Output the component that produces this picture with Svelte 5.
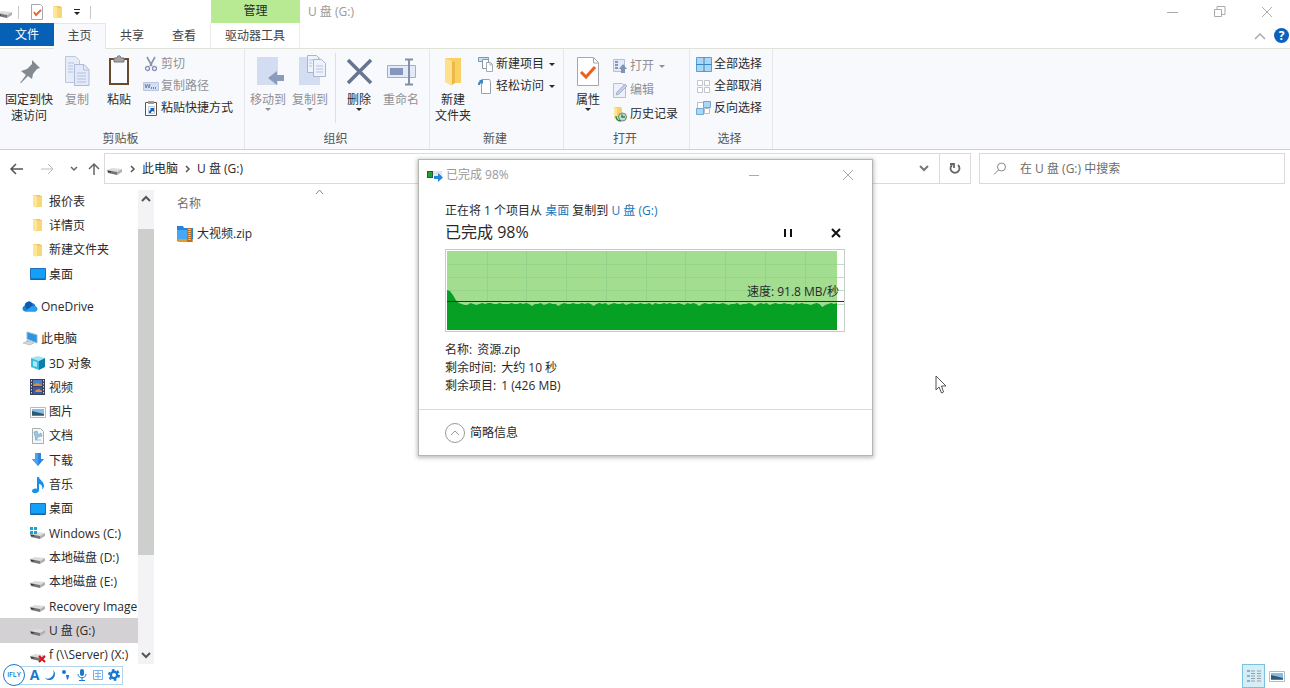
<script lang="ts">
    const tabs = [
        { name: '文件', kind: 'file-tab' },
        { name: '主页', kind: 'active' },
        { name: '共享', kind: '' },
        { name: '查看', kind: '' },
        { name: '驱动器工具', kind: 'context' }
    ];

    // groups of the navigation pane, from top to bottom
    const tree = [
        [
            { name: '报价表', icon: 'folder' },
            { name: '详情页', icon: 'folder' },
            { name: '新建文件夹', icon: 'folder' },
            { name: '桌面', icon: 'desktop' }
        ],
        [{ name: 'OneDrive', icon: 'cloud', root: true }],
        [
            { name: '此电脑', icon: 'pc', root: true },
            { name: '3D 对象', icon: 'cube' },
            { name: '视频', icon: 'video' },
            { name: '图片', icon: 'picture' },
            { name: '文档', icon: 'document' },
            { name: '下载', icon: 'download' },
            { name: '音乐', icon: 'music' },
            { name: '桌面', icon: 'desktop' },
            { name: 'Windows (C:)', icon: 'windrive' },
            { name: '本地磁盘 (D:)', icon: 'drive' },
            { name: '本地磁盘 (E:)', icon: 'drive' },
            { name: 'Recovery Image', icon: 'drive' },
            { name: 'U 盘 (G:)', icon: 'drive', selected: true },
            { name: 'f (\\\\Server) (X:)', icon: 'netdrive' }
        ]
    ];

    // transfer speed curve, one sample every few pixels
    const speed = [40, 41, 45, 50, 53, 54, 55, 55, 53, 54, 55, 54, 53, 54, 53, 53, 54, 54, 53, 54, 54, 54, 53, 54, 54, 53, 54, 53, 54, 56, 54, 54, 53, 55, 54, 53, 54, 54, 56, 54];
    const tail = [53, 54, 54, 53, 54, 54, 53, 54, 53, 54, 56, 54, 53, 54, 53, 55, 54, 53, 54, 54, 53, 55, 54, 53, 54, 54, 53, 54, 54, 53, 55, 53, 54, 54, 53, 54, 53, 54, 54, 53, 54, 55, 53, 54, 53, 54, 56, 54, 53, 54, 54, 53, 54, 54, 53, 54, 55, 54, 54, 53, 55, 54, 54, 53, 54, 56, 54, 53, 54, 53, 55, 54, 53, 54, 54, 53, 54, 54, 55, 53, 54, 53, 54, 54, 55, 54, 53, 54, 57, 55, 54, 53, 54, 53];
    const samples = [...speed, ...tail];
    const step = 390 / (samples.length - 1);
    const curve = 'M2 81 ' + samples.map((y, i) => `L${(2 + i * step).toFixed(1)} ${y + 1}`).join(' ') + ' L392 81Z';

    let open = $state(true);
</script>

{#snippet icon(name, size = 16)}
    <svg class="icon" width={size} height={size} viewBox={size > 16 ? '0 0 32 32' : '0 0 16 16'} aria-hidden="true">
        {#if name === 'folder'}
            <path d="M3 2h7l1 1h1v11H5l-2-1z" fill="#f3c95c" />
            <path d="M3 2l4 1v12l-4-2z" fill="#ffe59a" />
            <path d="M7 4h5v10H7z" fill="#f8d777" />
        {:else if name === 'desktop'}
            <path d="M.5 2.500h15v11H.5z" fill="#12a0f8" stroke="#1c6fb8" />
            <path d="M1 13h14" stroke="#155a94" />
        {:else if name === 'cloud'}
            <path d="M3 13.500a3 3 0 0 1-.5-5.800A4 4 0 0 1 9.500 5a4 4 0 0 1 4 3.500 2.600 2.600 0 0 1 0 5z" fill="#1683d8" />
            <path d="M3 7.500A4 4 0 0 1 10 5l1 2.500-6 4z" fill="#0a5cb0" />
            <path d="M3 13.500l7-5.500 3.500.5a2.600 2.600 0 0 1 0 5z" fill="#2a9df0" />
        {:else if name === 'pc'}
            <path d="M5 1l10 3v8L5 8z" fill="#2f93e0" stroke="#8eb9d8" />
            <path d="M5 9l4 2-1 1-4-1z" fill="#a0a8b0" />
            <path d="M1 12l5-2 6 2-4 2z" fill="#d4d8dc" stroke="#a8acb4" stroke-width=".6" />
        {:else if name === 'cube'}
            <path d="M1 3l7-2 7 2-6 3z" fill="#9ee4f4" />
            <path d="M1 3l8 3v9l-8-3z" fill="#38bde0" />
            <path d="M9 6l6-3v9l-6 3z" fill="#0a7fae" />
            <path d="M3 6l4 1v5l-4-1z" fill="#a6ebf8" />
        {:else if name === 'video'}
            <path d="M0 0h15v16H0z" fill="#38405c" />
            <path d="M3 1h9v6H3z" fill="#4c80c8" />
            <path d="M3 8h9v7H3z" fill="#3a58ac" />
            <path d="M3 6l4-2 5 2v1H3zM6 11l3-1 3 2v1H5z" fill="#d89040" />
            <path d="M1.500 1v14M13.500 1v14" stroke="#d0d4dc" stroke-dasharray="1.500 1.500" />
        {:else if name === 'picture'}
            <path d="M.5 3.500h15v10H.5z" fill="#fff" stroke="#b4bcc4" />
            <path d="M2 5h12v7H2z" fill="#86bce8" />
            <path d="M2 7l4 1 8 2v2H2z" fill="#2f5a72" />
            <path d="M2 11l12 0v1H2z" fill="#3d86c4" />
        {:else if name === 'document'}
            <path d="M2.500.5h8l3 3v12h-11z" fill="#f4f8fa" stroke="#a6b0ae" />
            <path d="M4 4l3-1 1 4 3-2 1 3-4 1-2 3-1-4zM5 12h6" fill="#9cc8e4" stroke="#6f94b4" stroke-width=".6" />
        {:else if name === 'download'}
            <path d="M5 1h6v6h3l-6 7-6-7h3z" fill="#2e86dc" />
            <path d="M5 1h3v13L2 7h3z" fill="#4da0ea" />
        {:else if name === 'music'}
            <path d="M7 0h2c0 3 5 4 5 9 0 1-1 3-2 3 1-3-1-5-3-5v6c0 4-7 4-7 1 0-2 3-3 5-2z" fill="#1590ec" />
        {:else if name === 'drive' || name === 'windrive' || name === 'netdrive'}
            <path d="M0 9l5-2 10 1-5 3z" fill="#dcdcdc" />
            <path d="M0 9l10 2v3L1 12z" fill="#757575" />
            <path d="M10 11l5-3v3l-5 3z" fill="#b0b0b0" />
            <path d="M1 10l3 .6v1l-3-.6z" fill="#2c2c2c" />
            {#if name === 'windrive'}
                <path d="M0 2h3v3H0zM4 2h3v3H4zM0 6h3v3H0zM4 6h3v3H4z" fill="#17a4d4" />
            {:else if name === 'netdrive'}
                <path d="M9 9l6 6M15 9l-6 6" stroke="#d8141c" stroke-width="2" />
            {/if}
        {:else if name === 'zip'}
            <path d="M0 0h6l1 2h9v13H0z" fill="#2384dc" />
            <path d="M0 4h10v9H0z" fill="#46a8f4" />
            <path d="M0 13h16v3H1z" fill="#e49a2c" />
            <path d="M10 2h5v14h-5z" fill="#c06f1e" />
            <path d="M12.500 3v12" stroke="#ffd88c" stroke-dasharray="1 1" stroke-width="2" />
        {:else if name === 'check'}
            <path d="M2.500.5h9l2 2v13h-11z" fill="#fff" stroke="#a8a8b2" />
            <path d="M5 8l2 3 5-5" fill="none" stroke="#e8622c" stroke-width="1.800" />
        {:else if name === 'scissors'}
            <path d="M4 1l5 9M12 1L7 10" stroke="#8a93a8" stroke-width="1.600" fill="none" />
            <circle cx="4.500" cy="12.500" r="2" fill="none" stroke="#8a93b8" stroke-width="1.300" />
            <circle cx="11.500" cy="12.500" r="2" fill="none" stroke="#8a93b8" stroke-width="1.300" />
        {:else if name === 'path'}
            <path d="M.5 4.500h15v8H.5z" fill="#d4dff4" stroke="#b9c7e4" />
            <path d="M2 6l1 4 1.500-4L6 10l1-4" fill="none" stroke="#7484a8" />
            <path d="M8 10h6" stroke="#7484a8" stroke-dasharray="1 1" stroke-width="2" />
        {:else if name === 'shortcut'}
            <path d="M2.500 2.500h11v13h-11z" fill="#fff" stroke="#6b5342" />
            <path d="M5 1h6v3H5z" fill="#9a9a9a" />
            <path d="M5.500 6.500h6v7h-6z" fill="#fff" stroke="#9bb6d4" stroke-width=".7" />
            <path d="M6 13c0-2 .5-3 2-3.500L7 8h4v4l-1-1c-1 .2-2 .8-2 2z" fill="#1a5fb0" />
        {:else if name === 'newitem'}
            <path d="M.5 1.500h10v4H.5z" fill="#c3e0f6" stroke="#7e98b4" />
            <path d="M4.500 3.500h6v9h-6z" fill="#fff" stroke="#8c98a4" />
            <path d="M8.500 6.500h4l2 2v7h-6z" fill="#fff" stroke="#a4aab2" />
            <path d="M12 7v2h3" fill="none" stroke="#a4aab2" />
        {:else if name === 'easy'}
            <path d="M3.500 1.500h8l1 2v12h-9z" fill="#fff" stroke="#9aa2aa" />
            <path d="M0 7c0-2 0-3 2-4L1 2h4v4L4 5C2 5 2 6 2 7z" fill="#3f88c8" />
        {:else if name === 'openfile'}
            <path d="M1.500 1.500h11v12h-11z" fill="#e4ebf8" stroke="#b4c0d8" />
            <path d="M3 4h3M3 7h3M3 10h3" stroke="#8796c0" stroke-width="2" />
            <path d="M9 15v-4H7l4-5 4 5h-2v4z" fill="#8292b4" />
        {:else if name === 'edit'}
            <path d="M1.500 1.500h9l3 3v11h-12z" fill="#eef1fa" stroke="#b4bed4" />
            <path d="M4 13l1-3 8-8 2 2-8 8z" fill="#c4cfea" stroke="#9aa6c4" stroke-width=".8" />
        {:else if name === 'history'}
            <path d="M2 1h7l1 2v10H2z" fill="#f7d06a" />
            <path d="M2 1l3 1v12l-3-1z" fill="#ffe59a" />
            <circle cx="10.500" cy="11" r="4" fill="#c9d6cf" stroke="#6c8478" />
            <path d="M10 8.500V11h3M4 10c0 3 2 5 5 5" fill="none" stroke="#23864a" stroke-width="1.400" />
        {:else if name === 'selall'}
            <path d="M.5 1.500h15v14H.5z" fill="#a9d7f7" stroke="#5a9fd4" />
            <path d="M8 1v15M0 8.500h16" stroke="#3c86c4" />
        {:else if name === 'selnone'}
            <path d="M1.500 2.500h5v5h-5zM8.500 2.500h5v5h-5zM1.500 9.500h5v5h-5zM8.500 9.500h5v5h-5z" fill="#fff" stroke="#c0c4cc" />
        {:else if name === 'selinv'}
            <path d="M1.500 2.500h6v6h-6zM8.500 8.500h5v5h-5z" fill="#fff" stroke="#b8bcc4" />
            <path d="M7.500 1.500h7v6h-7zM.5 8.500h7v6h-7z" fill="#a9d7f7" stroke="#6ea8d8" />
        {:else if name === 'copying'}
            <path d="M0 4h6v7H0z" fill="#2a5a38" />
            <path d="M1 5h4v5H1z" fill="#1fa030" />
            <path d="M6 4h9v5H6z" fill="#e2e4e6" />
            <path d="M7 9h4V6l5 4.500-5 4.500v-3H7z" fill="#1e88dc" />
        {:else if name === 'details'}
            <path d="M1 2h3v2H1zM1 7h3v2H1zM1 12h3v2H1z" fill="#7fb4cc" />
            <path d="M5 3h4M11 3h4M5 8h4M11 8h4M5 13h4M11 13h4M5 5.500h4M11 5.500h4M5 10.500h4M11 10.500h4" stroke="#98a0a6" />
        {:else if name === 'pin'}
            <path d="M19 5l8 8-3 1-4 5-1 5-4-3-7 7-1 0 6-8-5-4 6-2 5-5z" fill="#83898f" />
        {:else if name === 'copy'}
            <path d="M4.500 1.500h10l4 4v22h-14z" fill="#e6ecf8" stroke="#bcc7de" />
            <path d="M14 9.500h9l5 5v16H13.500v-21z" fill="#e2e9f8" stroke="#aebad8" />
            <path d="M22.500 10v5H28M16 18h9M16 21h9M16 24h9M16 27h9M7 8h6M7 11h5M7 14h5M7 17h5" fill="none" stroke="#b4c2e2" />
        {:else if name === 'paste'}
            <path d="M7 4h18v25H7z" fill="#fafcff" stroke="#6b4a2c" stroke-width="2" />
            <path d="M11 3h3c0-3 4-3 4 0h3v4H11z" fill="#a4a4a4" stroke="#777" />
        {:else if name === 'moveto' || name === 'copyto'}
            <path d="M5 2h21v28H5z" fill="#d3ddf2" />
            {#if name === 'moveto'}
                <path d="M16 23l9-7v4h7v6h-7v4z" fill="#8b9bbd" />
            {:else}
                <path d="M13.500.5h9l2 2v15h-11z" fill="#eef2fa" stroke="#a9b6d0" />
                <path d="M19.500 4.500h8l4 4v13h-12z" fill="#eef2fa" stroke="#a9b6d0" />
                <path d="M22 11h7M22 14h7M22 17h7M15 5h4M15 8h3M15 11h3" stroke="#b4c2e2" />
            {/if}
        {:else if name === 'delete'}
            <path d="M5 5l23 23M28 5L5 28" stroke="#67758e" stroke-width="3.500" />
        {:else if name === 'rename'}
            <path d="M2.500 10.500h28v12h-28z" fill="#e2eaf8" stroke="#9cb0d4" />
            <path d="M5 13h13v7H5z" fill="#8496bc" />
            <path d="M20 4.500h8M20 29.500h8M24 4v26" stroke="#8290a8" stroke-width="2" />
        {:else if name === 'newfolder'}
            <path d="M8 3h16v25H12l-4-2z" fill="#fbd062" />
            <path d="M8 3l7 3v25l-7-4z" fill="#ffe08c" />
            <path d="M15 6l3 1v21l-3 2z" fill="#edb848" />
        {:else if name === 'props'}
            <path d="M5.500 2.500h16l5 5v23h-21z" fill="#fff" stroke="#a2a8ae" />
            <path d="M21.500 3v5h5" fill="none" stroke="#a2a8ae" />
            <path d="M9 17l5 5 9-10" fill="none" stroke="#ec5f20" stroke-width="3" />
        {/if}
    </svg>
{/snippet}

{#snippet big(label, name, off = false, caret = false, second = '')}
    <button class="big" class:off>
        {@render icon(name, 32)}
        <span>{label}</span>
        {#if second}<span>{second}</span>{/if}
        {#if caret}<i class="caret"></i>{/if}
    </button>
{/snippet}

{#snippet small(label, name, off = false, caret = false)}
    <button class="small" class:off>
        {@render icon(name)}<span>{label}</span>
        {#if caret}<i class="caret"></i>{/if}
    </button>
{/snippet}

<div class="window">
    <header class="titlebar">
        <div class="quick">
            {@render icon('drive')}
            <i class="bar"></i>
            <button aria-label="属性">{@render icon('check')}</button>
            <button aria-label="新建文件夹">{@render icon('folder')}</button>
            <button aria-label="自定义快速访问工具栏">
                <svg width="8" height="8" viewBox="0 0 8 8"><path d="M1 1.500h6" stroke="#222" /><path d="M1 4h6L4 7z" fill="#222" /></svg>
            </button>
            <i class="bar"></i>
        </div>
        <div class="context-head">管理</div>
        <h1>U 盘 (G:)</h1>
        <div class="controls">
            <button aria-label="最小化"><svg width="12" height="12"><path d="M0 6.500h11" /></svg></button>
            <button aria-label="还原"><svg width="12" height="12"><path d="M.5 3.500h7v7h-7zM3 3V.5h8v8H8" /></svg></button>
            <button aria-label="关闭"><svg width="12" height="12"><path d="M1 1l10 10M11 1L1 11" /></svg></button>
        </div>
    </header>

    <nav class="tabs">
        {#each tabs as tab}
            <button class={tab.kind}>{tab.name}</button>
        {/each}
        <span class="grow"></span>
        <button class="fold" aria-label="折叠功能区"><svg width="12" height="8"><path d="M1 7l5-5 5 5" fill="none" stroke="#aaa" stroke-width="1.500" /></svg></button>
        <button class="help" aria-label="帮助">?</button>
    </nav>

    <section class="ribbon">
        <div class="group clip">
            <div class="tools">
                {@render big('固定到快', 'pin', false, false, '速访问')}
                {@render big('复制', 'copy', true)}
                {@render big('粘贴', 'paste')}
                <div class="stack">
                    {@render small('剪切', 'scissors', true)}
                    {@render small('复制路径', 'path', true)}
                    {@render small('粘贴快捷方式', 'shortcut')}
                </div>
            </div>
            <p>剪贴板</p>
        </div>
        <div class="group organize">
            <div class="tools">
                {@render big('移动到', 'moveto', true, true)}
                {@render big('复制到', 'copyto', true, true)}
                <i class="split"></i>
                {@render big('删除', 'delete', false, true)}
                {@render big('重命名', 'rename', true)}
            </div>
            <p>组织</p>
        </div>
        <div class="group create">
            <div class="tools">
                {@render big('新建', 'newfolder', false, false, '文件夹')}
                <div class="stack">
                    {@render small('新建项目', 'newitem', false, true)}
                    {@render small('轻松访问', 'easy', false, true)}
                </div>
            </div>
            <p>新建</p>
        </div>
        <div class="group opening">
            <div class="tools">
                {@render big('属性', 'props', false, true)}
                <div class="stack loose">
                    {@render small('打开', 'openfile', true, true)}
                    {@render small('编辑', 'edit', true)}
                    {@render small('历史记录', 'history')}
                </div>
            </div>
            <p>打开</p>
        </div>
        <div class="group select">
            <div class="tools">
                <div class="stack">
                    {@render small('全部选择', 'selall')}
                    {@render small('全部取消', 'selnone')}
                    {@render small('反向选择', 'selinv')}
                </div>
            </div>
            <p>选择</p>
        </div>
    </section>

    <div class="location">
        <div class="history">
            <button aria-label="后退"><svg width="14" height="12"><path d="M14 6H2M7 1L2 6l5 5" stroke="#555" stroke-width="1.500" /></svg></button>
            <button aria-label="前进"><svg width="14" height="12"><path d="M0 6h12M7 1l5 5-5 5" stroke="#bbb" /></svg></button>
            <button class="narrow" aria-label="最近位置"><svg width="8" height="6"><path d="M1 1l3 3 3-3" stroke="#666" stroke-width="1.500" /></svg></button>
            <button class="narrow" aria-label="上移"><svg width="12" height="14"><path d="M6 13V2M1 7l5-5 5 5" stroke="#666" stroke-width="1.500" /></svg></button>
        </div>
        <div class="address">
            {@render icon('drive')}
            <svg class="sep" width="6" height="8"><path d="M1 1l3 3-3 3" /></svg>
            <a href="#pc">此电脑</a>
            <svg class="sep" width="6" height="8"><path d="M1 1l3 3-3 3" /></svg>
            <a href="#g">U 盘 (G:)</a>
            <span class="grow"></span>
            <button aria-label="以前的位置"><svg width="10" height="7"><path d="M1 1l4 4 4-4" stroke="#777" stroke-width="2" /></svg></button>
            <button class="refresh" aria-label="刷新"><svg width="12" height="13"><path d="M9 3a4.500 4.500 0 1 1-6 0M1 2h4v4" stroke="#666" stroke-width="1.800" /></svg></button>
        </div>
        <label class="search">
            <svg width="14" height="14"><circle cx="8.500" cy="5" r="4" /><path d="M5.500 8L1 12.500" /></svg>
            <input type="text" placeholder="在 U 盘 (G:) 中搜索" aria-label="搜索" />
        </label>
    </div>

    <main>
        <aside>
            <div class="tree">
                {#each tree as group}
                    {#each group as item, i}
                        <a href="#{item.icon}" class:root={item.root} class:first={i === 0} class:selected={item.selected}>
                            {@render icon(item.icon)}<span>{item.name}</span>
                        </a>
                    {/each}
                {/each}
            </div>
            <div class="scroll">
                <button aria-label="向上滚动"><svg width="10" height="7"><path d="M1 6l4-4 4 4" /></svg></button>
                <div class="track"><div class="thumb"></div></div>
                <button aria-label="向下滚动"><svg width="10" height="7"><path d="M1 1l4 4 4-4" /></svg></button>
            </div>
        </aside>
        <div class="files">
            <div class="columns">
                <button>名称</button>
                <svg width="9" height="6"><path d="M1 5l3.500-4L8 5" /></svg>
            </div>
            <a class="file" href="#zip">{@render icon('zip')}<span>大视频.zip</span></a>
            <div class="views">
                <button class="on" aria-label="详细信息">{@render icon('details')}</button>
                <button aria-label="大图标">{@render icon('picture')}</button>
            </div>
        </div>
    </main>

    <div class="dialog" role="dialog" aria-label="已完成 98%">
        <div class="dialog-title">
            {@render icon('copying')}
            <span>已完成 98%</span>
            <button aria-label="最小化"><svg width="12" height="12"><path d="M1 6.500h10" /></svg></button>
            <button class="close" aria-label="关闭"><svg width="12" height="12"><path d="M1 1l10 10M11 1L1 11" /></svg></button>
        </div>
        <div class="dialog-body">
            <p>正在将 1 个项目从 <a href="#desktop">桌面</a> 复制到 <a href="#g">U 盘 (G:)</a></p>
            <div class="progress">
                <h2>已完成 98%</h2>
                <button aria-label="暂停"><svg width="10" height="10"><path d="M2 1v8M8 1v8" stroke-width="2" /></svg></button>
                <button aria-label="取消"><svg width="10" height="10"><path d="M1 1l8 8M9 1L1 9" stroke-width="2" /></svg></button>
            </div>
            <div class="chart">
                <svg viewBox="0 0 400 83">
                    <rect x=".5" y=".5" width="399" height="82" fill="#fff" stroke="#c6cdc6" />
                    <rect x="2" y="2" width="390" height="79" fill="#a2dd90" />
                    {#each [15, 28, 41, 55] as y}
                        <path d="M2 {y}.5H399" stroke="#8fd08a" opacity=".6" />
                    {/each}
                    {#each [42, 81, 121, 161, 201, 240, 280, 320, 360] as x}
                        <path d="M{x}.5 2V81" stroke="#8fd08a" opacity=".7" />
                    {/each}
                    <path d={curve} fill="#06a024" />
                    <path d="M2 52.500H399" stroke="#203820" />
                </svg>
                <span>速度: 91.8 MB/秒</span>
            </div>
            {#if open}
                <dl>
                    <div><dt>名称:</dt><dd>资源.zip</dd></div>
                    <div><dt>剩余时间:</dt><dd>大约 10 秒</dd></div>
                    <div><dt>剩余项目:</dt><dd>1 (426 MB)</dd></div>
                </dl>
            {/if}
        </div>
        <button class="less" onclick={() => (open = !open)}>
            <svg width="20" height="20"><circle cx="10" cy="10" r="9.500" /><path d="M6 12l4-4 4 4" /></svg>
            <span>简略信息</span>
        </button>
    </div>

    <svg class="cursor" width="13" height="20" viewBox="0 0 13 20"><path d="M1 1v14l3-3 2.500 6 2-1L6.500 11H11z" fill="#fff" stroke="#555" /></svg>

    <div class="ime">
        <b>iFLY</b>
        <span>A</span>
        <svg width="12" height="12"><path d="M9 1a6 6 0 0 1-8 8c3 4 10 2 10-4 0-2-1-3-2-4z" /></svg>
        <svg width="12" height="12"><circle cx="4" cy="3" r="2" /><path d="M6 6h3c0 3-1 4-2 5" /></svg>
        <svg width="12" height="12"><rect x="4" y="0" width="4" height="7" rx="2" /><path d="M2 5c0 5 8 5 8 0M6 9v3M3 11.500h6" fill="none" stroke="#1878d0" /></svg>
        <svg width="12" height="12"><path d="M1.500 1.500h9v9h-9zM6 2v8M3 4.500h6M3 7.500h6" fill="none" stroke="#7ab0e4" /></svg>
        <svg width="12" height="12"><circle cx="6" cy="6" r="3.200" fill="none" stroke="#1878d0" stroke-width="2.400" /><circle cx="6" cy="6" r="5" fill="none" stroke="#1878d0" stroke-width="2" stroke-dasharray="2.600 2.600" /></svg>
    </div>
</div>

<style>
    :global(body) {
        margin: 0;
        background: #fff;
    }

    .window {
        position: relative;
        display: flex;
        flex-direction: column;
        min-height: 100vh;
        overflow: hidden;
        background: #fff;
        color: #2a2a2a;
        font: 12px/16px "Open Sans", "Noto Sans CJK SC", sans-serif;
    }

    button {
        display: flex;
        align-items: center;
        justify-content: center;
        margin: 0;
        padding: 0;
        border: 0;
        background: none;
        color: inherit;
        font: inherit;
        white-space: nowrap;
    }

    a {
        color: inherit;
        text-decoration: none;
    }

    h1, h2, p, dl, dd {
        margin: 0;
        font-weight: normal;
    }

    svg {
        display: block;
        flex-shrink: 0;
    }

    .grow {
        flex: 1;
    }

    .titlebar {
        display: flex;
        height: 23px;
    }

    .quick {
        display: flex;
        align-items: center;
        box-sizing: border-box;
        width: 211px;
        padding-top: 1px;
        gap: 5px;
    }

    .quick > .icon {
        margin-left: -3px;
    }

    .quick .bar {
        width: 1px;
        height: 13px;
        background: #c8c8c8;
    }

    .quick button:nth-of-type(1) {
        margin-left: 5px;
    }

    .quick button:nth-of-type(3) {
        margin: 0 4px 0 2px;
    }

    .context-head {
        width: 89px;
        background: #b7ea92;
        line-height: 22px;
        text-align: center;
    }

    h1 {
        flex: 1;
        padding-left: 8px;
        color: #999;
        font-size: 12px;
        line-height: 24px;
    }

    .controls {
        display: flex;
    }

    .controls button {
        width: 47px;
    }

    .controls path, .dialog-title button path {
        fill: none;
        stroke: #aaa;
    }

    .tabs {
        display: flex;
        align-items: center;
        height: 25px;
        padding-right: 1px;
    }

    .tabs button {
        width: 52px;
        height: 25px;
        color: #444;
    }

    .tabs .file-tab {
        width: 54px;
        height: 23px;
        align-self: flex-start;
        background: #0560b6;
        color: #fff;
    }

    .tabs .active {
        position: relative;
        z-index: 1;
        height: 26px;
        box-sizing: border-box;
        border: 1px solid #e6e6ea;
        border-width: 1px 1px 0 0;
        background: #f8f9fc;
    }

    .tabs .context {
        width: 90px;
        box-sizing: border-box;
        border: 1px solid #ececec;
        border-width: 0 1px;
    }

    .tabs .fold {
        width: 20px;
    }

    .tabs .help {
        width: 15px;
        height: 15px;
        margin: 0 0 0 4px;
        border-radius: 50%;
        background: #0b62bc;
        color: #fff;
        font-weight: bold;
        line-height: 15px;
    }

    .ribbon {
        display: flex;
        height: 102px;
        box-sizing: border-box;
        border: 1px solid #e2e3d8;
        border-width: 1px 0;
        border-bottom-color: #d0d0d4;
        background: #f8f9fc;
    }

    .group {
        display: flex;
        flex-direction: column;
        box-sizing: border-box;
        border-right: 1px solid #e6e7ec;
    }

    .group p {
        padding: 0 3px 1px 0;
        color: #555;
        line-height: 18px;
        text-align: center;
    }

    .tools {
        display: flex;
        flex: 1;
        align-items: flex-start;
        padding-top: 4px;
    }

    .clip {
        width: 245px;
    }

    .organize {
        width: 185px;
    }

    .create {
        width: 134px;
    }

    .opening {
        width: 126px;
    }

    .select {
        width: 83px;
    }

    .big {
        flex-direction: column;
        justify-content: flex-start;
        width: 42px;
        padding-top: 2px;
    }

    .big span:first-of-type {
        padding-top: 5px;
    }

    .clip .big:first-child {
        width: 56px;
        padding-left: 2px;
    }

    .create .big {
        width: 46px;
    }

    .organize .tools {
        padding-left: 2px;
    }

    .opening .tools {
        padding-left: 3px;
    }

    .split {
        width: 1px;
        height: 70px;
        margin: 0 2px 0 4px;
        background: #dcdfe6;
    }

    .off {
        color: #8f9196;
    }

    .caret {
        border: 3px solid transparent;
        border-top-color: currentColor;
        border-bottom: 0;
    }

    .stack {
        display: flex;
        flex-direction: column;
        align-items: flex-start;
        padding-left: 3px;
    }

    .create .stack {
        padding-left: 2px;
    }

    .select .stack {
        padding-left: 6px;
    }

    .small {
        height: 22px;
        gap: 2px;
    }

    .loose {
        padding-top: 1px;
    }

    .loose .small {
        height: 24px;
    }

    .small .caret {
        margin-left: 3px;
    }

    .location {
        display: flex;
        height: 31px;
        padding: 3px 5px 5px 0;
    }

    .history {
        display: flex;
        width: 104px;
    }

    .history button {
        width: 32px;
    }

    .history .narrow {
        width: 20px;
    }

    .history path, .address button path {
        fill: none;
    }

    .address, .search {
        display: flex;
        align-items: center;
        box-sizing: border-box;
        border: 1px solid #dcd8dd;
    }

    .address {
        flex: 1;
        padding-left: 2px;
    }

    .sep {
        margin: 0 6px 0 7px;
    }

    .sep path {
        fill: none;
        stroke: #555;
        stroke-width: 1.5;
    }

    .address button {
        width: 31px;
        height: 29px;
    }

    .address .refresh {
        border-left: 1px solid #dcd8dd;
    }

    .search {
        width: 306px;
        margin-left: 8px;
        padding-left: 13px;
        gap: 13px;
    }

    .search svg {
        fill: none;
        stroke: #888;
    }

    .search input {
        flex: 1;
        min-width: 0;
        padding: 0;
        border: 0;
        outline: 0;
        background: none;
        font: inherit;
    }

    .search input::placeholder {
        color: #6c6c6c;
        opacity: 1;
    }

    main {
        display: flex;
        flex: 1;
    }

    aside {
        display: flex;
        width: 154px;
        box-sizing: border-box;
        padding-bottom: 21px;
    }

    .tree {
        display: flex;
        flex-direction: column;
        flex: 1;
        min-width: 0;
    }

    .tree a {
        display: flex;
        flex: 1;
        align-items: center;
        gap: 3px;
        padding-left: 30px;
        overflow: hidden;
        white-space: nowrap;
    }

    .tree span {
        padding-top: 1px;
    }

    .tree .root {
        padding-left: 22px;
    }

    .tree .first:not(:first-child) {
        margin-top: 8px;
    }

    .tree .selected {
        background: #d3d1d4;
    }

    .scroll {
        display: flex;
        flex-direction: column;
        width: 16px;
        margin: 1px 0 3px;
        background: #f3f2f4;
    }

    .scroll button {
        height: 17px;
    }

    .scroll path {
        fill: none;
        stroke: #555;
        stroke-width: 2;
    }

    .track {
        display: flex;
        flex: 1;
        flex-direction: column;
        justify-content: center;
    }

    .thumb {
        height: 74%;
        margin-bottom: 70px;
        background: #cccfcc;
    }

    .files {
        display: flex;
        flex: 1;
        flex-direction: column;
        padding-left: 23px;
    }

    .columns {
        display: flex;
        height: 29px;
    }

    .columns button {
        width: 138px;
        justify-content: flex-start;
        color: #6d6d6d;
    }

    .columns path {
        fill: none;
        stroke: #888;
    }

    .file {
        display: flex;
        align-items: center;
        gap: 4px;
        height: 32px;
    }

    .views {
        display: flex;
        justify-content: flex-end;
        margin-top: auto;
        padding-right: 2px;
    }

    .views button {
        width: 23px;
        height: 24px;
        box-sizing: border-box;
    }

    .views .on {
        border: 1px solid #7fc0dc;
        background: #d4edf6;
    }

    .dialog {
        position: absolute;
        top: 159px;
        left: 418px;
        width: 455px;
        box-sizing: border-box;
        border: 1px solid #b4b6b4;
        background: #fff;
        box-shadow: 0 1px 4px 1px rgba(90, 100, 90, 0.4);
    }

    .dialog-title {
        display: flex;
        align-items: center;
        height: 29px;
        padding: 0 10px 0 8px;
        gap: 3px;
        color: #999;
    }

    .dialog-title span {
        flex: 1;
    }

    .dialog-title button {
        width: 28px;
        height: 28px;
    }

    .dialog-title .close {
        margin-left: 63px;
    }

    .dialog-body {
        padding: 14px 27px 14px 26px;
    }

    .dialog-body a {
        color: #1a76bc;
    }

    .progress {
        display: flex;
        align-items: center;
        height: 26px;
        padding-right: 4px;
        gap: 38px;
        margin-bottom: 4px;
    }

    .progress h2 {
        flex: 1;
        font-size: 16px;
        line-height: 26px;
    }

    .progress button {
        padding-top: 2px;
    }

    .progress path {
        stroke: #111;
    }

    .chart {
        position: relative;
    }

    .chart svg {
        width: 100%;
    }

    .chart span {
        position: absolute;
        right: 6px;
        bottom: 32px;
    }

    dl {
        padding-top: 9px;
    }

    dl div {
        display: flex;
        gap: 5px;
        line-height: 18px;
    }

    .less {
        width: 100%;
        height: 46px;
        justify-content: flex-start;
        padding-left: 26px;
        gap: 5px;
        border-top: 1px solid #dcdadd;
    }

    .less svg {
        fill: none;
        stroke: #999;
    }

    .cursor {
        position: absolute;
        top: 375px;
        left: 935px;
    }

    .ime {
        position: absolute;
        z-index: 0;
        bottom: 2px;
        left: 3px;
        display: flex;
        align-items: center;
        height: 22px;
        gap: 4px;
        fill: #1878d0;
        color: #1878d0;
    }

    .ime::before {
        content: "";
        position: absolute;
        z-index: -1;
        inset: 2px -3px 1px 11px;
        border: 1px solid #b4d4ea;
        background: #fff;
    }

    .ime b {
        width: 20px;
        height: 20px;
        border: 1px solid #1878d0;
        border-radius: 50%;
        background: #fff;
        font-size: 7px;
        font-weight: 600;
        line-height: 20px;
        text-align: center;
    }

    .ime span {
        width: 11px;
        font-size: 14px;
        font-weight: bold;
        text-align: center;
    }
</style>
